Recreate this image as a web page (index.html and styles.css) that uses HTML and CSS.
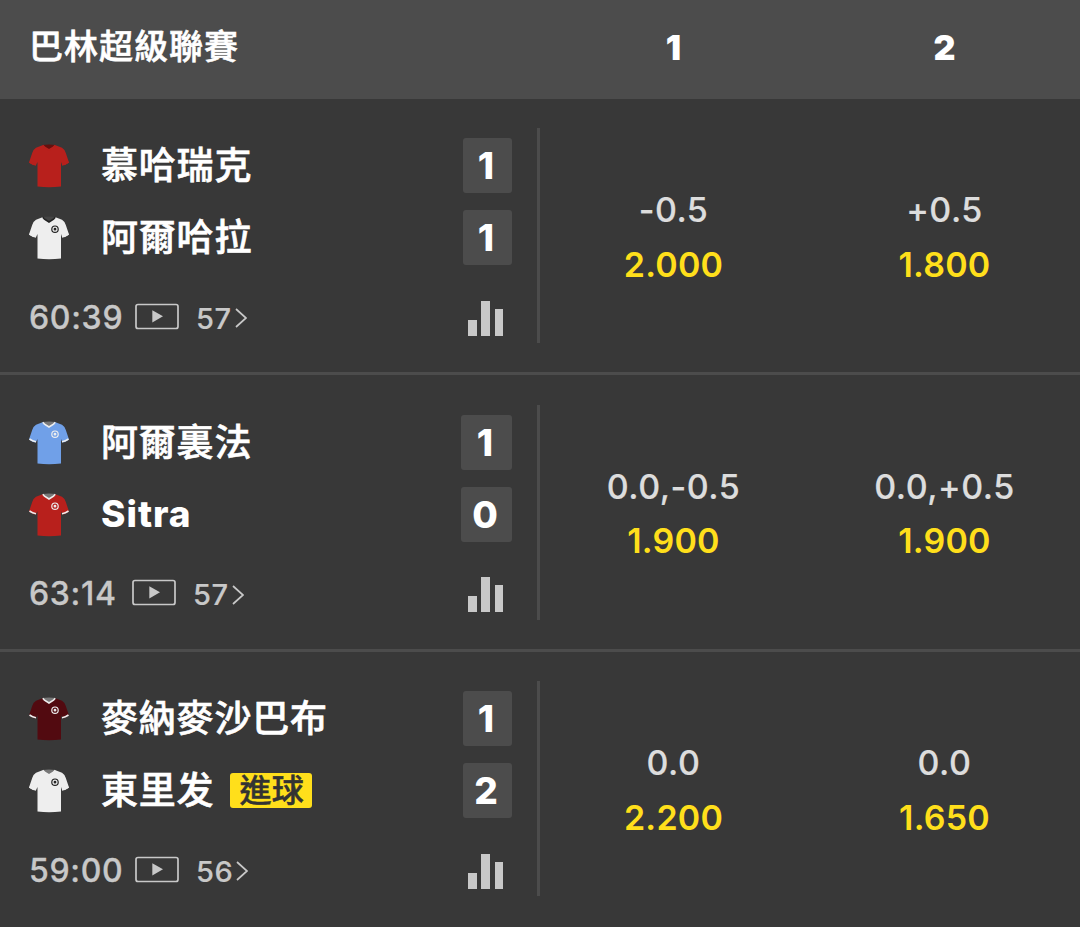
FILE: index.html
```
<!DOCTYPE html>
<html lang="zh-Hant">
<head>
    <meta charset="UTF-8">
    <meta name="viewport" content="width=device-width, initial-scale=1.0">
    <title>巴林超級聯賽</title>
    <link rel="stylesheet" href="styles.css">
</head>
<body>
    <!-- Shared icons -->
    <svg class="icon-defs" width="0" height="0">
        <symbol id="shirt" viewBox="0 0 40 44">
            <path class="shirt-back" d="M13.5 1Q20 0 26.5 1L24 5H16Z"/>
            <path class="shirt-body" d="M13.5 1.2L20 6L26.5 1.2L33 3.7Q35.600 5.200 36.800 9L40 18.5Q37 21 33.300 21.500L32 18V42.5Q20 44 8.500 42.5V18L6.800 21.500Q3 21 0 18.5L3.200 9Q4.400 5.200 7 3.700Z"/>
            <path class="shirt-cuff" d="M.5 18Q3.500 20.200 7 20.700M39.500 18Q36.500 20.200 33 20.700"/>
            <path class="shirt-collar" d="M13.800 1.300L15.500 3.200L20 6L24.500 3.200L26.200 1.300"/>
            <g class="shirt-badge">
                <circle cx="26" cy="13.200" r="3.200"/>
                <circle class="dot" cx="26" cy="13.200" r=".8"/>
            </g>
        </symbol>
        <symbol id="play" viewBox="0 0 44 26">
            <rect x="1" y="1" width="42" height="24" rx="2" fill="none" stroke="currentColor" stroke-width="1.700"/>
            <path d="M17.300 6.700L28 12.800L17.300 19Z" fill="currentColor"/>
        </symbol>
        <symbol id="arrow" viewBox="0 0 12 20">
            <path d="M1 1L11 10L1 19" fill="none" stroke="currentColor" stroke-width="1.700"/>
        </symbol>
        <symbol id="stats" viewBox="0 0 36 35">
            <path d="M0 19H9V35H0ZM13 0H22V35H13ZM27 8H35V35H27Z" fill="currentColor"/>
        </symbol>
    </svg>

    <div class="league-header">
        <div class="league-name">巴林超級聯賽</div>
        <div class="column-label">1</div>
        <div class="column-label">2</div>
    </div>

    <div class="match">
        <div class="match-info">
            <div class="match-main">
                <div class="teams">
                    <div class="team">
                        <svg class="shirt red plain"><use href="#shirt"/></svg>
                        <span class="team-name">慕哈瑞克</span>
                    </div>
                    <div class="team">
                        <svg class="shirt white dark-collar"><use href="#shirt"/></svg>
                        <span class="team-name">阿爾哈拉</span>
                    </div>
                </div>
                <div class="scores">
                    <div class="score">1</div>
                    <div class="score">1</div>
                </div>
            </div>
            <div class="match-footer">
                <span class="clock">60:39</span>
                <svg class="play"><use href="#play"/></svg>
                <span class="markets">57</span>
                <svg class="arrow"><use href="#arrow"/></svg>
                <svg class="stats"><use href="#stats"/></svg>
            </div>
        </div>
        <div class="odds">
            <div class="handicap">-0.5</div>
            <div class="price">2.000</div>
        </div>
        <div class="odds">
            <div class="handicap">+0.5</div>
            <div class="price">1.800</div>
        </div>
    </div>

    <div class="match">
        <div class="match-info">
            <div class="match-main">
                <div class="teams">
                    <div class="team">
                        <svg class="shirt blue"><use href="#shirt"/></svg>
                        <span class="team-name">阿爾裏法</span>
                    </div>
                    <div class="team">
                        <svg class="shirt red"><use href="#shirt"/></svg>
                        <span class="team-name latin">Sitra</span>
                    </div>
                </div>
                <div class="scores wide">
                    <div class="score">1</div>
                    <div class="score">0</div>
                </div>
            </div>
            <div class="match-footer">
                <span class="clock narrow">63:14</span>
                <svg class="play"><use href="#play"/></svg>
                <span class="markets">57</span>
                <svg class="arrow"><use href="#arrow"/></svg>
                <svg class="stats"><use href="#stats"/></svg>
            </div>
        </div>
        <div class="odds">
            <div class="handicap">0.0,-0.5</div>
            <div class="price">1.900</div>
        </div>
        <div class="odds">
            <div class="handicap">0.0,+0.5</div>
            <div class="price">1.900</div>
        </div>
    </div>

    <div class="match">
        <div class="match-info">
            <div class="match-main">
                <div class="teams">
                    <div class="team">
                        <svg class="shirt maroon"><use href="#shirt"/></svg>
                        <span class="team-name">麥納麥沙巴布</span>
                    </div>
                    <div class="team">
                        <svg class="shirt white"><use href="#shirt"/></svg>
                        <span class="team-name">東里发</span>
                        <span class="goal-tag">進球</span>
                    </div>
                </div>
                <div class="scores">
                    <div class="score">1</div>
                    <div class="score">2</div>
                </div>
            </div>
            <div class="match-footer">
                <span class="clock">59:00</span>
                <svg class="play"><use href="#play"/></svg>
                <span class="markets">56</span>
                <svg class="arrow"><use href="#arrow"/></svg>
                <svg class="stats"><use href="#stats"/></svg>
            </div>
        </div>
        <div class="odds">
            <div class="handicap">0.0</div>
            <div class="price">2.200</div>
        </div>
        <div class="odds">
            <div class="handicap">0.0</div>
            <div class="price">1.650</div>
        </div>
    </div>
</body>
</html>
```
FILE: styles.css
```
* {
    box-sizing: border-box;
}

body {
    margin: 0;
    height: 927px;
    overflow: hidden;
    background-color: #383838;
    font-family: Inter, "Noto Sans CJK TC", sans-serif;
    color: #fff;
}

.icon-defs {
    display: block;
}

.league-header,
.match {
    display: grid;
    grid-template-columns: 538px 271px 271px;
}

.league-header {
    height: 98.5px;
    align-items: center;
    padding-bottom: 4px;
    background-color: #4c4c4c;
}

.league-name {
    padding-left: 29px;
    font-size: 34px;
    font-weight: 500;
    line-height: 50px;
    letter-spacing: 1px;
    -webkit-text-stroke: 0.6px;
}

.column-label {
    text-align: center;
    font-size: 34px;
    font-weight: 900;
}

.match {
    height: 276.5px;
    padding-top: 29.5px;
    border-bottom: 3px solid #4c4c4c;
}

.match:last-child {
    border-bottom: none;
}

.match-info {
    width: 540px;
    height: 215px;
    padding: 10px 25.5px 0 29px;
    border-right: 3px solid #4c4c4c;
}

.match-main {
    display: flex;
    justify-content: space-between;
}

.teams,
.scores {
    display: flex;
    flex-direction: column;
    gap: 17px;
}

.team {
    display: flex;
    align-items: center;
    height: 55px;
}

.shirt {
    width: 40px;
    height: 44px;
    margin: 1px 32px 0 0;
    --trim: #eee;
    --badge: #eee;
    --back: #777;
}

.shirt-back { fill: var(--back); }
.shirt-body { fill: var(--shirt); }

.shirt-cuff,
.shirt-collar {
    fill: none;
    stroke: var(--trim);
    stroke-width: 1.6;
}

.shirt-collar { stroke: var(--collar, var(--trim)); }

.shirt-badge {
    fill: none;
    stroke: var(--badge);
    stroke-width: 1.2;
}

.shirt-badge .dot { fill: var(--badge); }

.red { --shirt: #b8201c; }
.blue { --shirt: #70a0e8; }
.maroon { --shirt: #520a10; }

.white {
    --shirt: #eee;
    --badge: #222;
}

.dark-collar {
    --collar: #222;
    --back: #444;
}

.plain {
    --trim: #b8201c;
    --badge: transparent;
    --back: #64100e;
    --collar: #b8201c;
}

.plain .shirt-back,
.plain .shirt-collar {
    stroke-width: 3;
}

.team-name {
    padding-top: 1px;
    font-size: 37px;
    font-weight: 500;
    line-height: 54px;
    letter-spacing: 0.8px;
    -webkit-text-stroke: 0.6px;
}

.latin {
    padding-top: 0;
    font-weight: 800;
    letter-spacing: 1px;
    -webkit-text-stroke: 0;
}

.goal-tag {
    height: 35px;
    margin: -1px 0 0 16px;
    padding: 0 8px 0 9px;
    border-radius: 3px;
    background-color: #ffdf1b;
    color: #333;
    font-size: 32px;
    font-weight: 500;
    line-height: 35px;
    letter-spacing: 0.4px;
    -webkit-text-stroke: 0.5px;
}

.score {
    width: 49px;
    height: 55px;
    padding-right: 2px;
    border-radius: 3px;
    background-color: #4c4c4c;
    text-align: center;
    font-size: 37px;
    font-weight: 800;
    line-height: 55px;
}

.wide .score {
    width: 51px;
}

.match-footer {
    display: flex;
    align-items: center;
    height: 40px;
    margin-top: 32px;
    color: #c8c8c8;
}

.clock {
    width: 106px;
    font-size: 32px;
    font-weight: 500;
    letter-spacing: 0.7px;
    -webkit-text-stroke: 0.3px;
}

.clock.narrow {
    width: 103px;
}

.play {
    width: 44px;
    height: 27px;
    margin-bottom: 2px;
}

.markets {
    margin: 2px 0 0 17px;
    font-size: 29px;
    font-weight: 500;
    letter-spacing: 0.5px;
    -webkit-text-stroke: 0.2px;
}

.arrow {
    width: 12px;
    height: 20px;
    margin: 2px 0 0 3px;
}

.stats {
    width: 36px;
    height: 35px;
    margin: 2px 8px 0 auto;
}

.odds {
    padding-top: 55px;
    text-align: center;
    font-size: 34px;
    font-weight: 500;
    line-height: 54.5px;
    letter-spacing: 0.5px;
}

.handicap {
    color: #ddd;
    -webkit-text-stroke: 0.2px;
}

.price {
    color: #ffdf1b;
    font-weight: 600;
    letter-spacing: 0.2px;
}
```
